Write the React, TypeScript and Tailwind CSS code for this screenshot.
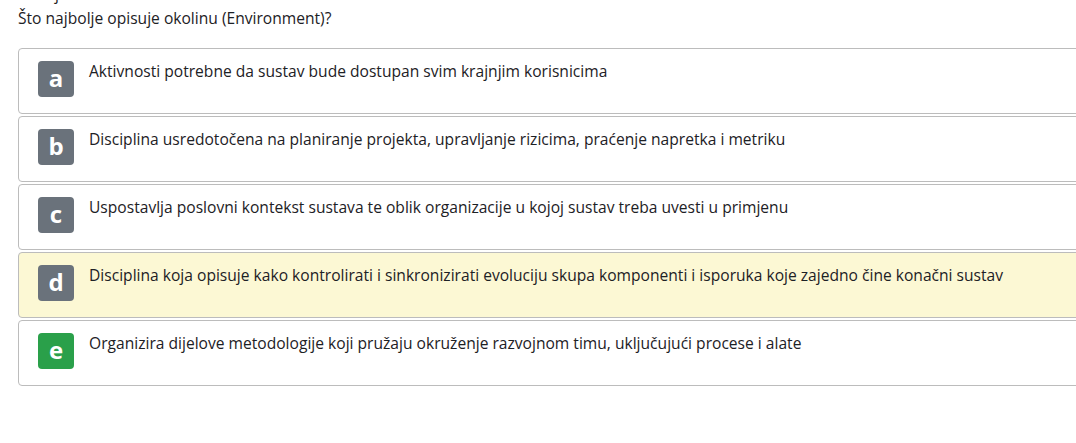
const options = [
  { letter: 'a', text: 'Aktivnosti potrebne da sustav bude dostupan svim krajnjim korisnicima' },
  { letter: 'b', text: 'Disciplina usredotočena na planiranje projekta, upravljanje rizicima, praćenje napretka i metriku' },
  { letter: 'c', text: 'Uspostavlja poslovni kontekst sustava te oblik organizacije u kojoj sustav treba uvesti u primjenu' },
  {
    letter: 'd',
    text: 'Disciplina koja opisuje kako kontrolirati i sinkronizirati evoluciju skupa komponenti i isporuka koje zajedno čine konačni sustav',
    highlighted: true,
  },
  { letter: 'e', text: 'Organizira dijelove metodologije koji pružaju okruženje razvojnom timu, uključujući procese i alate', correct: true },
];

export default function App() {
  return (
    <div
      className="min-h-[443px] overflow-hidden bg-white pl-[18px] text-[15.6px] text-[#1d2125]"
      style={{ fontFamily: '"Open Sans", "Noto Sans", sans-serif' }}
    >
      <div className="-mt-[14px] leading-[16px]">Pitanje 12</div>
      <p className="mt-[5px] leading-[22px]">Što najbolje opisuje okolinu (Environment)?</p>
      <div className="mt-[19px] -mr-4 flex flex-col gap-[2px]">
        {options.map(o => (
          <div
            key={o.letter}
            className={`flex h-[66px] items-start rounded-[4px] border border-[#bcbcbc] pl-[19px] pt-[12px] ${
              o.highlighted ? 'bg-[#fcf8d4]' : 'bg-white'
            }`}
          >
            <span
              className={`flex h-9 w-9 shrink-0 items-center justify-center rounded-[4px] text-[24px] font-bold leading-none text-white ${
                o.correct ? 'bg-[#2aa04a]' : 'bg-[#6a727b]'
              }`}
            >
              <span className="-mt-[3px]">{o.letter}</span>
            </span>
            <span className="-mt-[1px] ml-[15px] leading-[22px]">{o.text}</span>
          </div>
        ))}
      </div>
    </div>
  );
}
